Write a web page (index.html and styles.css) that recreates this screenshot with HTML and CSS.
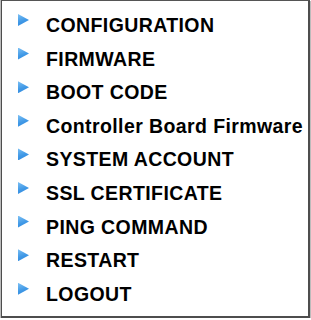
FILE: index.html
```html
<!DOCTYPE html>
<html lang="en">
<head>
  <meta charset="UTF-8" />
  <title>Menu</title>
  <link rel="stylesheet" href="styles.css">
</head>
<body>

  <div class="panel">
    <ul class="menu">
      <li><span class="arrow"></span><a href="#">CONFIGURATION</a></li>
      <li><span class="arrow"></span><a href="#">FIRMWARE</a></li>
      <li><span class="arrow"></span><a href="#">BOOT CODE</a></li>
      <li><span class="arrow"></span><a href="#">Controller Board Firmware</a></li>
      <li><span class="arrow"></span><a href="#">SYSTEM ACCOUNT</a></li>
      <li><span class="arrow"></span><a href="#">SSL CERTIFICATE</a></li>
      <li><span class="arrow"></span><a href="#">PING COMMAND</a></li>
      <li><span class="arrow"></span><a href="#">RESTART</a></li>
      <li><span class="arrow"></span><a href="#">LOGOUT</a></li>
    </ul>
  </div>

</body>
</html>
```

FILE: styles.css
```css
body {
  margin: 0;
  background: #fff;
  font-family: "Liberation Sans", Arial, sans-serif;
}
.panel {
  width: 306px;
  height: 315px;
  border: 2px solid #4d4d4d;
  border-left: 1px solid #4d4d4d;
  border-top: 1px solid #555;
  margin-left: 1px;
  box-shadow: -1px 0 0 #bbb, 1px 1px 0 #bbb;
  box-sizing: content-box;
}
.menu {
  list-style: none;
  margin: 0;
  padding: 8px 0 0 0;
}
.menu li {
  display: flex;
  align-items: flex-start;
  height: 33.6px;
  line-height: 33.6px;
}
.arrow {
  flex: none;
  width: 11px;
  height: 12px;
  margin: 5px 17px 0 16px;
  background: linear-gradient(160deg, #7cc0f4, #3f98e6 55%, #2f86dc);
  clip-path: polygon(0 0, 100% 50%, 0 100%);
}
.menu a {
  color: #000;
  text-decoration: none;
  font-weight: bold;
  font-size: 19.5px;
  letter-spacing: 0.4px;
}
```
